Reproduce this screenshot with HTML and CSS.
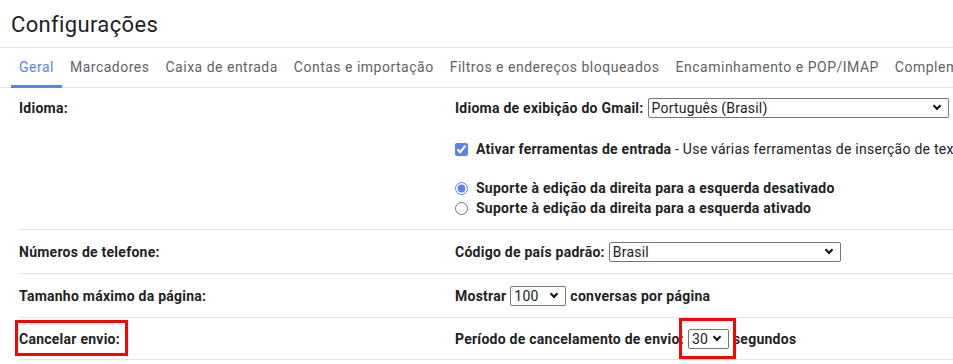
FILE: index.html
```html
<!DOCTYPE html>
<html lang="pt-BR">
<head>
  <meta charset="UTF-8" />
  <meta name="viewport" content="width=device-width, initial-scale=1.0" />
  <title>Configurações</title>
  <link rel="stylesheet" href="styles.css">
</head>
<body>
  <header class="page-title">
    <h1>Configurações</h1>
  </header>

  <nav class="tabs">
    <a class="tab active">Geral</a>
    <a class="tab">Marcadores</a>
    <a class="tab">Caixa de entrada</a>
    <a class="tab">Contas e importação</a>
    <a class="tab">Filtros e endereços bloqueados</a>
    <a class="tab">Encaminhamento e POP/IMAP</a>
    <a class="tab">Complementos</a>
  </nav>

  <div class="settings">
    <div class="row row-first">
      <div class="label">Idioma:</div>
      <div class="value">
        <div class="line">
          <b>Idioma de exibição do Gmail:</b>
          <span class="select-wrap">
            <select class="sel sel-lang">
              <option>Português (Brasil)</option>
            </select>
          </span>
          <a class="link">Alterar configurações de idioma para outros produtos do Google</a>
        </div>
        <label class="line check-line">
          <input type="checkbox" checked>
          <span><b>Ativar ferramentas de entrada</b> - Use várias ferramentas de inserção de texto para digitar no idioma de sua escolha</span>
        </label>
        <div class="radio-group">
          <label class="line check-line">
            <input type="radio" name="rtl" checked>
            <b>Suporte à edição da direita para a esquerda desativado</b>
          </label>
          <label class="line check-line">
            <input type="radio" name="rtl">
            <b>Suporte à edição da direita para a esquerda ativado</b>
          </label>
        </div>
      </div>
    </div>

    <div class="row">
      <div class="label">Números de telefone:</div>
      <div class="value">
        <div class="line">
          <b>Código de país padrão:</b>
          <span class="select-wrap">
            <select class="sel sel-country">
              <option>Brasil</option>
            </select>
          </span>
        </div>
      </div>
    </div>

    <div class="row">
      <div class="label">Tamanho máximo da página:</div>
      <div class="value">
        <div class="line">
          <b>Mostrar</b>
          <span class="select-wrap">
            <select class="sel sel-page">
              <option>100</option>
            </select>
          </span>
          <b>conversas por página</b>
        </div>
      </div>
    </div>

    <div class="row row-last">
      <div class="label"><span class="marked marked-label">Cancelar envio:</span></div>
      <div class="value">
        <div class="line">
          <b>Período de cancelamento de envio:</b>
          <span class="marked marked-select">
            <span class="select-wrap">
              <select class="sel sel-undo">
                <option>30</option>
              </select>
            </span>
          </span>
          <b>segundos</b>
        </div>
      </div>
    </div>
  </div>
</body>
</html>
```

FILE: styles.css
```css
:root {
  --text-color: #222;
  --tab-color: #5f6368;
  --accent-color: #5b84ea;
  --line-color: #e3e3e3;
  --mark-color: #f00;
}

body {
  margin: 0;
  width: 953px;
  height: 364px;
  overflow: hidden;
  font-family: Roboto, 'Liberation Sans', sans-serif;
  font-size: 14px;
  line-height: 20px;
  letter-spacing: 0.25px;
  color: var(--text-color);
  background: #fff;
  white-space: nowrap;
}

.page-title {
  padding: 12px 0 9px 11px;
  border-bottom: 1px solid var(--line-color);
}

.page-title h1 {
  margin: 0;
  font-size: 22px;
  line-height: 26px;
  font-weight: 400;
  letter-spacing: 0.35px;
  color: #202124;
}

.tabs {
  display: flex;
  padding-left: 11px;
  box-shadow: inset 0 -1px 0 var(--line-color);
}

.tab {
  flex: none;
  padding: 9px 8px 8px;
  border-bottom: 3px solid transparent;
  color: var(--tab-color);
  letter-spacing: 0.5px;
}

.tab.active {
  color: var(--accent-color);
  border-bottom-color: var(--accent-color);
}

.settings {
  margin-left: 19px;
  width: 1100px;
}

.row {
  display: grid;
  grid-template-columns: 436px 1fr;
  padding: 12px 0 11px;
  border-bottom: 1px solid var(--line-color);
}

.row-first {
  padding-top: 10px;
}

.row-last {
  padding: 11px 0 10px;
}

.label {
  font-weight: 700;
}

.value b {
  font-weight: 700;
}

.line {
  display: flex;
  align-items: center;
  gap: 4px;
  height: 20px;
}

.check-line {
  gap: 8px;
}

.check-line input {
  margin: 0;
  width: 13px;
  height: 13px;
  accent-color: var(--accent-color);
}

.value > .check-line {
  margin-top: 21px;
}

.radio-group {
  margin-top: 19px;
}

.select-wrap {
  position: relative;
  display: inline-flex;
}

/* bold chevron like the native Windows select arrow */
.select-wrap::after {
  content: "";
  position: absolute;
  right: 9px;
  top: 5px;
  width: 4px;
  height: 4px;
  border-right: 2.5px solid #111;
  border-bottom: 2.5px solid #111;
  transform: rotate(45deg);
  pointer-events: none;
}

.sel {
  appearance: none;
  height: 20px;
  margin: 0;
  padding: 0 0 0 3px;
  font-family: Roboto, 'Liberation Sans', sans-serif;
  font-size: 14px;
  letter-spacing: 0.2px;
  color: #222;
  background: #fff;
  border: 1px solid #767676;
  border-radius: 2px;
}

.sel-lang { width: 301px; }
.sel-country { width: 232px; }
.sel-page { width: 56px; }
.sel-undo { width: 41px; }

.link {
  margin-left: 2px;
  color: #15c;
  font-size: 13px;
}

/* red highlight boxes drawn over the screenshot */
.marked {
  position: relative;
  display: inline-flex;
}

.marked::after {
  content: "";
  position: absolute;
  border: 3px solid var(--mark-color);
  pointer-events: none;
}

.marked-label::after {
  left: -4px;
  right: -8px;
  top: -9px;
  bottom: -7px;
}

.marked-select::after {
  left: -9px;
  right: -7px;
  top: -11px;
  bottom: -10px;
}
```
